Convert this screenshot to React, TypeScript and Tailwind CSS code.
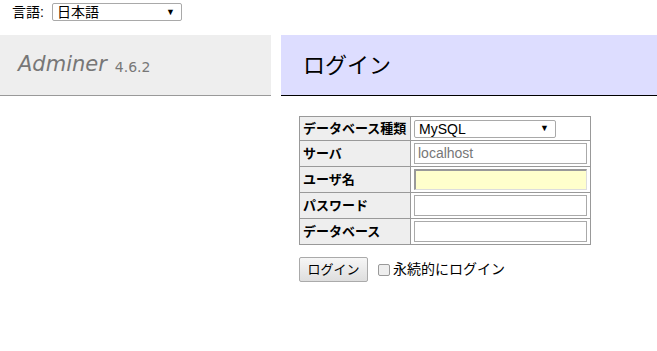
const font = { fontFamily: '"Liberation Sans", "Noto Sans CJK JP", sans-serif' };
const verdana = { fontFamily: '"DejaVu Sans", Verdana, sans-serif' };

function FakeSelect({ value, className }: { value: string; className: string }) {
  return (
    <div
      className={`flex items-center justify-between border border-[#a9a9a9] rounded-[2px] bg-white pl-1 pr-[6px] text-[14px] text-black ${className}`}
    >
      <span className="leading-none">{value}</span>
      <span className="text-[9px] leading-none">▼</span>
    </div>
  );
}

const rows = [
  { label: "サーバ", value: "localhost", placeholder: true },
  { label: "ユーザ名", value: "", focus: true },
  { label: "パスワード", value: "" },
  { label: "データベース", value: "" },
];

export default function App() {
  return (
    <div className="w-[657px] h-[351px] bg-white text-black overflow-hidden" style={font}>
      {/* language picker */}
      <div className="h-[35px] flex items-start pt-[3px] pl-[12px] text-[14px]">
        <span className="leading-[18px] w-[40px]">言語:</span>
        <FakeSelect value="日本語" className="w-[130px] h-[18px]" />
      </div>

      <div className="flex">
        <div
          className="w-[271px] h-[61px] bg-[#eee] border-b border-[#999] flex items-center pl-[18px] text-[#777]"
          style={verdana}
        >
          <span className="italic text-[21px]">Adminer</span>
          <span className="text-[14px] ml-[8px] mt-[4px]">4.6.2</span>
        </div>
        <div className="flex-1 ml-[10px] h-[61px] bg-[#ddf] border-b border-black flex items-center pl-[22px] text-[22px]">
          ログイン
        </div>
      </div>

      <div className="pl-[299px] pt-[20px]">
        <table className="border-collapse border border-[#999] text-[13px]">
          <tbody>
            <tr className="h-[24px]">
              <th className="w-[111px] bg-[#eee] border border-[#999] text-left font-bold px-[3px] whitespace-nowrap">
                データベース種類
              </th>
              <td className="w-[180px] border border-[#999] px-[3px]">
                <FakeSelect value="MySQL" className="w-[142px] h-[18px]" />
              </td>
            </tr>
            {rows.map((r) => (
              <tr key={r.label} className="h-[26px]">
                <th className="bg-[#eee] border border-[#999] text-left font-bold px-[3px] whitespace-nowrap">
                  {r.label}
                </th>
                <td className="border border-[#999] px-[3px]">
                  <div
                    className={
                      r.focus
                        ? "w-[173px] h-[21px] bg-[#ffc] border-t-2 border-l-2 border-b border-r border-t-[#999] border-l-[#999] border-b-[#ddd] border-r-[#ddd]"
                        : "w-[173px] h-[21px] bg-white border border-[#aaa] flex items-center px-[3px] text-[14px] text-[#777]"
                    }
                  >
                    {r.placeholder ? r.value : null}
                  </div>
                </td>
              </tr>
            ))}
          </tbody>
        </table>

        <div className="flex items-center mt-[12px] text-[14px]">
          <button className="w-[69px] h-[25px] border border-[#aaa] rounded-[2px] bg-gradient-to-b from-[#f6f6f6] to-[#dedede] text-[13px]">
            ログイン
          </button>
          <span className="ml-[10px] w-[12px] h-[12px] rounded-[2px] border border-[#999] bg-[#eee]" />
          <span className="ml-[3px]">永続的にログイン</span>
        </div>
      </div>
    </div>
  );
}
